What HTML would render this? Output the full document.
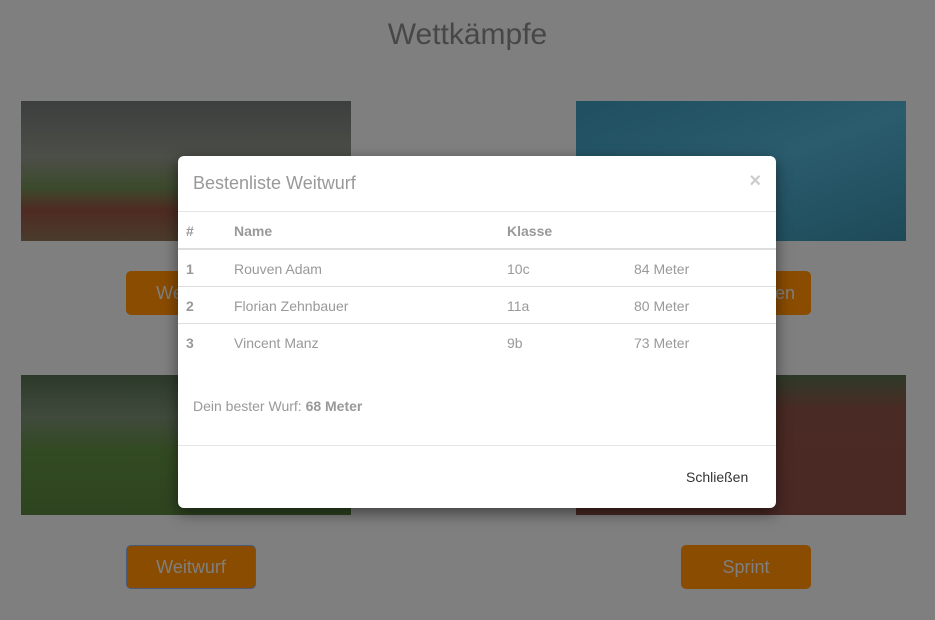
<!DOCTYPE html>
<html><head><meta charset="utf-8"><style>
*{margin:0;padding:0;box-sizing:border-box}
body{width:935px;height:620px;overflow:hidden;background:#7f7f7f;font-family:"Liberation Sans",sans-serif;position:relative}
.t{position:absolute;left:0;width:935px;top:18px;text-align:center;font-size:30px;color:#474747}
.img{position:absolute;width:330px;height:140px}
.btn{position:absolute;width:130px;height:44px;background:#8a4c00;border-radius:5px;color:#7f7f7f;font-size:18px;text-align:center;line-height:44px}
.modal{position:absolute;left:178px;top:156px;width:598px;height:352px;background:#fff;border-radius:6px;box-shadow:0 5px 15px rgba(0,0,0,.5);color:#999;font-size:14px}
.abs{position:absolute}
.hl{position:absolute;left:0;width:598px;height:1px;background:#e5e5e5}
</style></head><body>
<div class="t">Wettkämpfe</div>
<div class="img" style="left:21px;top:101px;background:linear-gradient(180deg,#3d3f3f 0%,#4c4e48 40%,#3c4a2c 62%,#4e2a22 78%,#4a3c2c 100%)"></div>
<div class="img" style="left:576px;top:101px;background:linear-gradient(160deg,#1f4f60,#2a5c6e 50%,#1e4a58)"></div>
<div class="img" style="left:21px;top:375px;background:linear-gradient(180deg,#2c3a2a 0%,#404a3c 30%,#324a22 55%,#2e4420 100%)"></div>
<div class="img" style="left:576px;top:375px;background:linear-gradient(180deg,#2e3a28 0%,#4a2a24 25%,#4a2824 100%)"></div>
<div class="btn" style="left:126px;top:271px">Weitwurf</div>
<div class="btn" style="left:681px;top:271px">Schwimmen</div>
<div class="btn" style="left:126px;top:545px;border:1px solid #4a5a7a;line-height:42px">Weitwurf</div>
<div class="btn" style="left:681px;top:545px">Sprint</div>
<div class="modal">
<div class="abs" style="left:15px;top:17px;font-size:18px;color:#999">Bestenliste Weitwurf</div>
<div class="abs" style="right:15px;top:14px;font-size:20px;font-weight:bold;color:#ccc">×</div>
<div class="hl" style="top:55px"></div>
<div class="abs" style="left:8px;top:67px;font-weight:bold">#</div>
<div class="abs" style="left:56px;top:67px;font-weight:bold">Name</div>
<div class="abs" style="left:329px;top:67px;font-weight:bold">Klasse</div>
<div class="hl" style="top:92px;height:2px;background:#ddd"></div>
<div class="abs" style="left:8px;top:105px;font-weight:bold">1</div><div class="abs" style="left:56px;top:105px">Rouven Adam</div><div class="abs" style="left:329px;top:105px">10c</div><div class="abs" style="left:456px;top:105px">84 Meter</div>
<div class="hl" style="top:130px;background:#ddd"></div>
<div class="abs" style="left:8px;top:142px;font-weight:bold">2</div><div class="abs" style="left:56px;top:142px">Florian Zehnbauer</div><div class="abs" style="left:329px;top:142px">11a</div><div class="abs" style="left:456px;top:142px">80 Meter</div>
<div class="hl" style="top:167px;background:#ddd"></div>
<div class="abs" style="left:8px;top:179px;font-weight:bold">3</div><div class="abs" style="left:56px;top:179px">Vincent Manz</div><div class="abs" style="left:329px;top:179px">9b</div><div class="abs" style="left:456px;top:179px">73 Meter</div>
<div class="abs" style="left:15px;top:242px">Dein bester Wurf: <b>68 Meter</b></div>
<div class="hl" style="top:289px"></div>
<div class="abs" style="left:508px;top:313px;color:#333">Schließen</div>
</div>
</body></html>
